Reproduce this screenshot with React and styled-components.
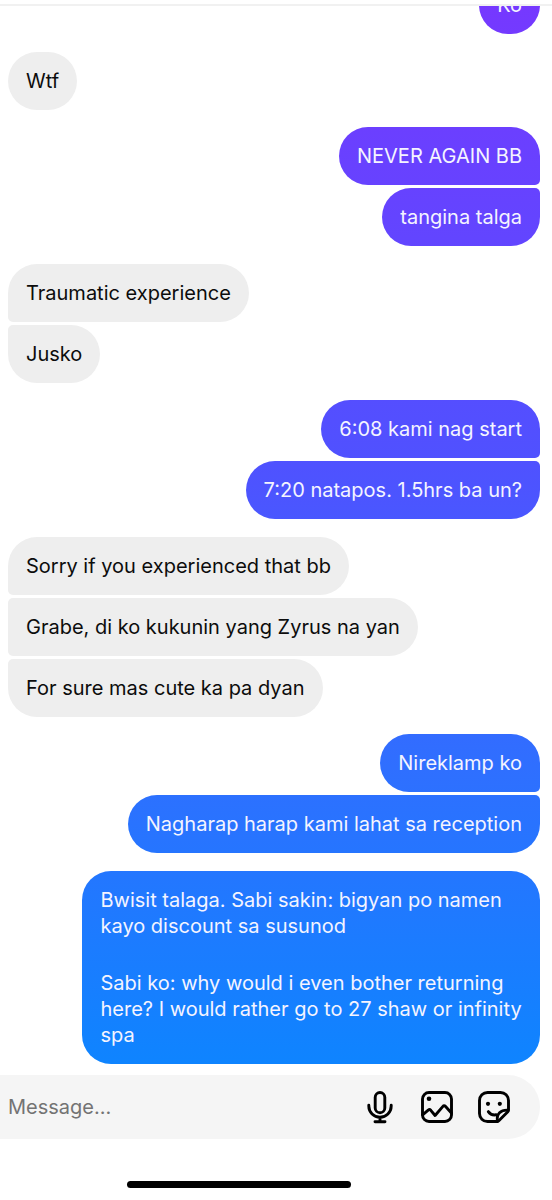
import React, { useState } from 'react'
import styled, { createGlobalStyle } from 'styled-components'

const GlobalStyle = createGlobalStyle`
    * {
        box-sizing: border-box;
    }

    body {
        margin: 0;
        background: #ffffff;
        font-family: Inter, "Liberation Sans", sans-serif;
        font-size: 20px;
        line-height: 26px;
    }
`

const Page = styled.div`
    display: flex;
    flex-direction: column;
    height: 100vh;
`

const TopBar = styled.header`
    flex: none;
    height: 6px;
    border-bottom: 2px solid #f1f1f1;
`

// The thread is pinned to its end, older messages are cut off at the top
const Thread = styled.main`
    flex: 1;
    min-height: 0;
    display: flex;
    flex-direction: column;
    justify-content: flex-end;
    padding: 0 12px 11px 8px;
    overflow: hidden;
`

const Group = styled.section`
    flex: none;
    display: flex;
    flex-direction: column;
    align-items: ${({mine}) => mine ? 'flex-end' : 'flex-start'};
    gap: 3px;
    margin-bottom: ${({mine}) => mine ? '18px' : '17px'};

    &:last-child {
        margin-bottom: 0;
    }
`

const Bubble = styled.div`
    display: flex;
    flex-direction: column;
    gap: 31px;
    max-width: 86%;
    padding: 16px 18px;
    border-radius: 29px;
    color: #0c0c0c;
    background: #eeeeee;

    &:not(:last-child) {
        border-bottom-left-radius: 5px;
    }

    &:not(:first-child) {
        border-top-left-radius: 5px;
    }
`

const MyBubble = styled(Bubble)`
    color: #f4f4ff;
    background: linear-gradient(#7638ff 0%, #5051ff 38%, #2f6fff 64%, #0a87ff 92%) fixed;

    &:not(:last-child) {
        border-bottom-left-radius: 29px;
        border-bottom-right-radius: 5px;
    }

    &:not(:first-child) {
        border-top-left-radius: 29px;
        border-top-right-radius: 5px;
    }
`

const Text = styled.p`
    margin: 0;
`

const Composer = styled.form`
    flex: none;
    display: flex;
    align-items: center;
    gap: 23px;
    height: 64px;
    margin-right: 12px;
    padding: 0 29px 0 8px;
    border-radius: 0 32px 32px 0;
    background: #f5f5f5;
`

const MessageInput = styled.input`
    flex: 1;
    min-width: 0;
    padding: 0;
    border: 0;
    outline: 0;
    background: transparent;
    font: inherit;
    color: #0c0c0c;

    &::placeholder {
        color: #737373;
        opacity: 1;
    }
`

const IconButton = styled.button`
    flex: none;
    display: flex;
    padding: 0;
    border: 0;
    background: none;
    color: #000000;
    cursor: pointer;
`

const Icon = styled.svg`
    width: 34px;
    height: 34px;
    fill: none;
    stroke: currentColor;
    stroke-width: 2.9;
    stroke-linecap: round;
    stroke-linejoin: round;
`

const Dot = styled.circle`
    fill: currentColor;
    stroke: none;
`

const BottomBar = styled.footer`
    flex: none;
    height: 61px;
    padding: 42px 0 0 23%;
`

const HomeIndicator = styled.div`
    width: 224px;
    height: 7px;
    border-radius: 4px;
    background: #000000;
`

const groups = [
    { mine: true, messages: ['Ko'] },
    { mine: false, messages: ['Wtf'] },
    { mine: true, messages: ['NEVER AGAIN BB', 'tangina talga'] },
    { mine: false, messages: ['Traumatic experience', 'Jusko'] },
    { mine: true, messages: ['6:08 kami nag start', '7:20 natapos. 1.5hrs ba un?'] },
    {
        mine: false,
        messages: [
            'Sorry if you experienced that bb',
            'Grabe, di ko kukunin yang Zyrus na yan',
            'For sure mas cute ka pa dyan'
        ]
    },
    { mine: true, messages: ['Nireklamp ko', 'Nagharap harap kami lahat sa reception'] },
    {
        mine: true,
        messages: [
            'Bwisit talaga. Sabi sakin: bigyan po namen kayo discount sa susunod\n\nSabi ko: why would i even bother returning here? I would rather go to 27 shaw or infinity spa'
        ]
    }
]

const MicIcon = () => (
    <Icon viewBox='0 0 34 34' aria-hidden='true'>
        <rect x='12.2' y='2.5' width='9.6' height='20.2' rx='4.8'/>
        <path d='M5.8 15.2v.9a11.2 11.2 0 0 0 22.4 0v-.9M17 27.5v4.2M12 31.7h10'/>
    </Icon>
)

const PhotoIcon = () => (
    <Icon viewBox='0 0 34 34' aria-hidden='true'>
        <rect x='2.5' y='2.5' width='29' height='29' rx='6.5'/>
        <Dot cx='9' cy='8.8' r='2.3'/>
        <path d='M2.6 24.8l5.6-4.7q1.4-1.1 2.6.2l4.3 5.2 7.6-8.9q1.4-1.6 2.9 0l5.8 6.4'/>
    </Icon>
)

const StickerIcon = () => (
    <Icon viewBox='0 0 34 34' aria-hidden='true'>
        <path d='M20.5 31.5H10.5a8 8 0 0 1-8-8v-13a8 8 0 0 1 8-8h13a8 8 0 0 1 8 8v9.6q0 1-.7 1.7l-9 9q-.6.6-1.3.7z'/>
        <path d='M31 20.2c-7.4-.4-11.7 3.6-10.6 11'/>
        <path d='M11.3 21.6c1.6 2.4 4.4 3.7 7.8 3.2'/>
        <Dot cx='11' cy='13.8' r='2.1'/>
        <Dot cx='22.8' cy='13.8' r='2.1'/>
    </Icon>
)

const App = () => {
    const [ draft, setDraft ] = useState('')

    return (
        <Page>
            <GlobalStyle/>
            <TopBar/>

            {/* Messages */}
            <Thread>
                {groups.map(({ mine, messages }, i) => {
                    const Message = mine ? MyBubble : Bubble
                    return (
                        <Group key={i} mine={mine}>
                            {messages.map(message => (
                                <Message key={message}>
                                    {message.split('\n\n').map(text => <Text key={text}>{text}</Text>)}
                                </Message>
                            ))}
                        </Group>
                    )
                })}
            </Thread>

            {/* Composer */}
            <Composer onSubmit={e => e.preventDefault()}>
                <MessageInput
                    aria-label='Message'
                    placeholder='Message...'
                    value={draft}
                    onChange={e => setDraft(e.target.value)}/>
                <IconButton type='button' aria-label='Record voice message'><MicIcon/></IconButton>
                <IconButton type='button' aria-label='Send photo'><PhotoIcon/></IconButton>
                <IconButton type='button' aria-label='Send sticker'><StickerIcon/></IconButton>
            </Composer>

            <BottomBar>
                <HomeIndicator/>
            </BottomBar>
        </Page>
    )
}

export default App
